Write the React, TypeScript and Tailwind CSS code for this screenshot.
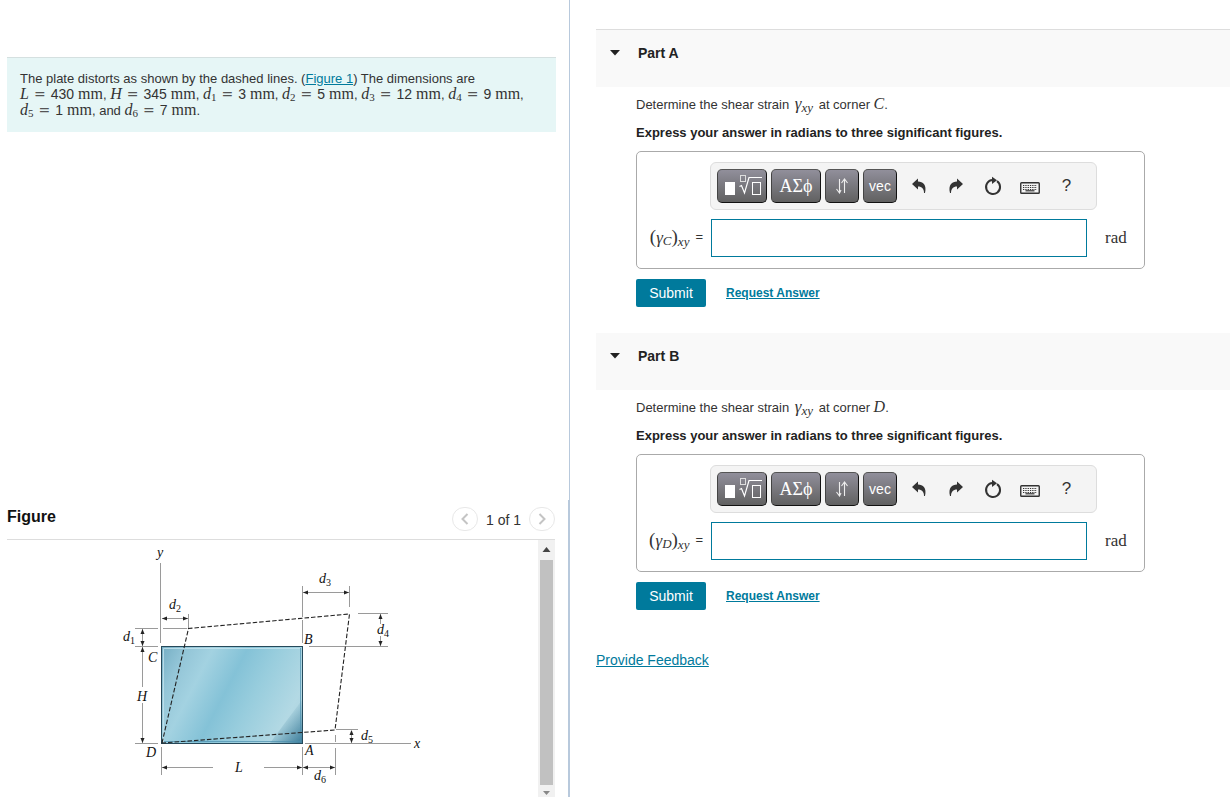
import React from "react";

const serif = "font-['Liberation_Serif',serif]";

function Var({ children, sub }: { children: string; sub?: string }) {
  return (
    <span className="font-['Liberation_Serif',serif] text-[16px] leading-[0] italic">
      {children}
      {sub && <span className="relative top-[2px] text-[11px] leading-[0] not-italic">{sub}</span>}
    </span>
  );
}

function Quantity({ name, sub, value }: { name: string; sub?: string; value: string }) {
  return (
    <span className="whitespace-nowrap">
      <Var sub={sub}>{name}</Var>
      <span className="mx-[5px] font-['DejaVu_Sans',sans-serif] text-[14px] leading-[0] text-[#555]">=</span>
      <span className="mr-1 text-[14px] leading-[0]">{value}</span>
      <span className="font-['Liberation_Serif',serif] text-[16px] leading-[0]">mm</span>
    </span>
  );
}

function Gamma() {
  return (
    <span className="mx-0.5 font-['Liberation_Serif',serif] text-[17px] leading-[0] italic">
      γ<span className="relative top-[3px] text-[13px] leading-[0]">xy</span>
    </span>
  );
}

const gray = "#9a9a9a";

function Arrow({ x, y, dir }: { x: number; y: number; dir: number }) {
  return <path d="M0 0 L-5 -2 L-5 2 Z" fill="#222" transform={`translate(${x} ${y}) rotate(${dir})`} />;
}

function Label({ x, y, children, sub }: { x: number; y: number; children: string; sub?: string }) {
  return (
    <text x={x} y={y} fontSize="14" fontStyle="italic" fill="#111" className={serif}>
      {children}
      {sub && (
        <tspan dy="3" fontSize="10" fontStyle="normal">
          {sub}
        </tspan>
      )}
    </text>
  );
}

function PlateDrawing() {
  return (
    <svg viewBox="100 540 345 250" width="345" height="250" role="img" aria-label="Distorted plate">
      <defs>
        <linearGradient id="plate" gradientUnits="userSpaceOnUse" x1="161" y1="646" x2="312" y2="724">
          <stop offset="0" stopColor="#74adc3" />
          <stop offset="0.14" stopColor="#93c5d7" />
          <stop offset="0.28" stopColor="#a3d2e1" />
          <stop offset="0.46" stopColor="#84c2d7" />
          <stop offset="0.62" stopColor="#98cddd" />
          <stop offset="0.85" stopColor="#b3d9e4" />
          <stop offset="1" stopColor="#a9d0dc" />
        </linearGradient>
        <linearGradient id="corner" gradientUnits="userSpaceOnUse" x1="284" y1="721" x2="303" y2="738">
          <stop offset="0" stopColor="#4586a2" stopOpacity="0.1" />
          <stop offset="1" stopColor="#3a7b99" stopOpacity="0.9" />
        </linearGradient>
      </defs>
      <g stroke={gray} strokeWidth="1" fill="none">
        <path d="M160.5 563V643M188.5 614V628M162 618.5H188M135 628.5H158M163 628.5H187M135 646.5H158M135 743.5H158" />
        <path d="M142.5 629V687M142.5 703V743M161.5 747V775M162 767.5H213M264 767.5H335" />
        <path d="M302.5 586V617M302.5 620V643M349.5 586V607M303 592.5H349M358 613.5H388M309 646.5H388" />
        <path d="M380.5 614V624M380.5 636V646M336 729.5H358M351.5 731V743M305 743.5H411M302.5 747V775M335.5 735V742M335.5 748V775" />
      </g>
      <rect x="161.5" y="646.5" width="141" height="97" fill="url(#plate)" />
      <path d="M302 700L270 743H302Z" fill="url(#corner)" />
      <rect x="161.5" y="646.5" width="141" height="97" fill="none" stroke="#26495a" />
      <path d="M163.5 742V648.5H300" fill="none" stroke="#c5e4ee" strokeOpacity=".8" />
      <path d="M300.5 648V741.5H164" fill="none" stroke="#4b8eae" strokeOpacity=".7" />
      <path
        d="M162 743L188.500 628.500L349.500 614L335 730Z"
        fill="none"
        stroke="#222"
        strokeWidth="1.1"
        strokeDasharray="4.500 2"
      />
      <Arrow x={162} y={618.5} dir={180} />
      <Arrow x={188} y={618.5} dir={0} />
      <Arrow x={142.5} y={629} dir={-90} />
      <Arrow x={142.5} y={646} dir={90} />
      <Arrow x={142.5} y={647} dir={-90} />
      <Arrow x={142.5} y={743} dir={90} />
      <Arrow x={162} y={767.5} dir={180} />
      <Arrow x={302} y={767.5} dir={0} />
      <Arrow x={303} y={767.5} dir={180} />
      <Arrow x={335} y={767.5} dir={0} />
      <Arrow x={303} y={592.5} dir={180} />
      <Arrow x={349} y={592.5} dir={0} />
      <Arrow x={380.5} y={614} dir={-90} />
      <Arrow x={380.5} y={646} dir={90} />
      <Arrow x={351.5} y={730} dir={-90} />
      <Arrow x={351.5} y={743} dir={90} />
      <Label x={157} y={557}>y</Label>
      <Label x={414} y={748}>x</Label>
      <Label x={169} y={609} sub="2">d</Label>
      <Label x={123} y={641} sub="1">d</Label>
      <Label x={319} y={583} sub="3">d</Label>
      <Label x={377} y={634} sub="4">d</Label>
      <Label x={361} y={740} sub="5">d</Label>
      <Label x={314} y={780} sub="6">d</Label>
      <Label x={148} y={662}>C</Label>
      <Label x={146} y={757}>D</Label>
      <Label x={304} y={644}>B</Label>
      <Label x={305} y={755}>A</Label>
      <Label x={137} y={701}>H</Label>
      <Label x={235} y={772}>L</Label>
    </svg>
  );
}

const dark =
  "flex h-[34px] items-center justify-center rounded-[5px] border border-[#111] border-t-[#555] border-l-[#444] bg-linear-to-b from-[#918f9b] to-[#616161] text-white";
const plain = "flex h-[34px] w-[33px] items-center justify-center pl-0.5 text-[#333]";

function Toolbar() {
  return (
    <div className="flex h-12 items-center gap-1 rounded-md border border-[#ddd] bg-[#f4f4f4] pl-1.5">
      <button type="button" aria-label="Templates" className={`${dark} w-[50px]`}>
        <svg width="40" height="24" viewBox="0 0 40 24" fill="none" stroke="#fff">
          <rect x="3" y="8" width="10" height="13" fill="#fff" stroke="none" />
          <rect x="18.500" y="1.500" width="5" height="6" stroke="#ddd" />
          <path d="M17.500 12.500L19.500 11.500L22.500 19L27 3.500H40" strokeWidth="1.200" />
          <rect x="30.500" y="8.500" width="8" height="12" />
        </svg>
      </button>
      <button
        type="button"
        aria-label="Greek symbols"
        className={`${dark} w-[50px] font-['Liberation_Serif',serif] text-[18px]`}
      >
        ΑΣϕ
      </button>
      <button type="button" aria-label="Arrows" className={`${dark} w-[34px]`}>
        <svg width="14" height="16" viewBox="0 0 14 16" fill="none" stroke="#eee" strokeWidth="1.100">
          <path d="M4.500 1V15M1.500 11L4.500 15L6 12M9.500 15V1M6.500 5L9.500 1L12.500 5" />
        </svg>
      </button>
      <button type="button" className={`${dark} w-[34px] text-[14px]`}>
        vec
      </button>
      <button type="button" aria-label="Undo" className={plain}>
        <svg width="16" height="18" viewBox="0 0 16 18" fill="currentColor">
          <path d="M1 7L7 1.500V4.500C12 4.500 16 8 14 16L13 16C13 12 11 9.500 7 9.500V12.500Z" />
        </svg>
      </button>
      <button type="button" aria-label="Redo" className={plain}>
        <svg width="16" height="18" viewBox="0 0 16 18" fill="currentColor">
          <path d="M15 7L9 1.500V4.500C4 4.500 0 8 2 16L3 16C3 12 5 9.500 9 9.500V12.500Z" />
        </svg>
      </button>
      <button type="button" aria-label="Reset" className={plain}>
        <svg width="18" height="20" viewBox="0 0 18 20">
          <path d="M13 5.200A7 7 0 1 1 8.500 4" fill="none" stroke="currentColor" strokeWidth="2" />
          <path d="M8 .8L13 4.300L8 8Z" fill="currentColor" />
        </svg>
      </button>
      <button type="button" aria-label="Keyboard shortcuts" className={`${plain} pt-1`}>
        <svg width="20" height="12" viewBox="0 0 20 12" fill="none" stroke="currentColor">
          <rect x=".750" y=".750" width="18.500" height="10.500" rx=".8" strokeWidth="1.400" />
          <path
            d="M3 3.500H17M3 5.500H17M3 7.500H17"
            strokeWidth="1.200"
            strokeDasharray="1.300 1"
          />
          <path d="M5.500 8.800H14.500" strokeWidth="1.200" />
        </svg>
      </button>
      <button type="button" aria-label="Help" className={`${plain} text-[17px]`}>
        ?
      </button>
    </div>
  );
}

function Part({ letter, corner, first }: { letter: string; corner: string; first?: boolean }) {
  const id = `answer-${letter}`;
  return (
    <section>
      <header
        className={`flex h-[58px] items-start gap-[18px] border-t bg-[#f9f9f9] bg-clip-padding pt-[15px] pl-3.5 ${
          first ? "border-[#ddd]" : "border-transparent"
        }`}
      >
        <svg width="10" height="6" viewBox="0 0 10 6" className="mt-[5px]">
          <path d="M0 0H10L5 5.500Z" fill="#222" />
        </svg>
        <h2 className="text-[14px] leading-4 font-bold text-[#222]">Part {letter}</h2>
      </header>
      <div className="pt-2.5 pb-[25px] pl-10">
        <p className="h-4 text-[13px] leading-4 whitespace-nowrap">
          Determine the shear strain <Gamma /> at corner <Var>{corner}</Var>.
        </p>
        <p className="mt-3 text-[13px] leading-4 font-bold text-[#222]">
          Express your answer in radians to three significant figures.
        </p>
        <div className="mt-2.5 mr-4 grid h-[118px] max-w-[509px] grid-cols-[74px_minmax(0,376px)_1fr] grid-rows-[48px_38px] gap-y-[9px] rounded-[5px] border border-[#aaa] pt-2.5">
          <div className="col-start-2 -ml-px w-[387px]">
            <Toolbar />
          </div>
          <label
            htmlFor={id}
            className="col-start-1 row-start-2 flex items-center justify-end gap-1.5 pr-2 pb-1 whitespace-nowrap"
          >
            <span className="font-['Liberation_Serif',serif] text-[19px] leading-none">
              (
              <span className="text-[17px] italic">
                γ<span className="relative top-[2px] text-[13px]">{corner}</span>
              </span>
              )<span className="relative top-[3px] text-[13px] italic">xy</span>
            </span>
            <span className="text-[13px] leading-none">=</span>
          </label>
          <input
            id={id}
            type="text"
            className="col-start-2 row-start-2 h-[38px] w-full border border-[#007a9c] bg-white px-2 text-[14px] outline-none"
          />
          <span className="col-start-3 row-start-2 self-center pb-0.5 pl-[18px] font-['Liberation_Serif',serif] text-[17px] leading-none">
            rad
          </span>
        </div>
        <div className="mt-2.5 flex items-center gap-5">
          <button type="button" className="h-7 w-[70px] rounded-[2px] bg-[#007a9c] text-[14px] font-medium text-white">
            Submit
          </button>
          <a href="#request" className="text-[12px] leading-4 font-bold text-[#007a9c] underline">
            Request Answer
          </a>
        </div>
      </div>
    </section>
  );
}

function Pager() {
  const ring = "flex h-6 w-[26px] items-center justify-center rounded-full border border-[#e8e8e8]";
  return (
    <nav aria-label="Figure pages" className="flex items-center gap-2 pb-0.5">
      <button type="button" aria-label="Previous figure" className={ring}>
        <svg width="8" height="12" viewBox="0 0 8 12" fill="none" stroke="#c4c4c4" strokeWidth="2">
          <path d="M6.500 1L1.500 6L6.500 11" />
        </svg>
      </button>
      <span className="pt-0.5 text-[14px] leading-4">1 of 1</span>
      <button type="button" aria-label="Next figure" className={ring}>
        <svg width="8" height="12" viewBox="0 0 8 12" fill="none" stroke="#c4c4c4" strokeWidth="2">
          <path d="M1.500 1L6.500 6L1.500 11" />
        </svg>
      </button>
    </nav>
  );
}

export default function App() {
  return (
    <div className="grid min-h-screen grid-cols-[minmax(0,57fr)_minmax(0,66fr)] bg-white font-['Liberation_Sans',Arial,sans-serif] text-[#333]">
      <div className="grid h-screen grid-rows-[500fr_297fr]">
        <section className="border-r border-[#b8c9dc] pt-[57px] pr-[13px] pl-[7px]">
          <p className="border-t border-[#d5e0e0] bg-[#e6f6f6] px-[13px] py-[13px] text-[13px] leading-4">
            The plate distorts as shown by the dashed lines. (
            <a href="#figure" className="text-[#007a9c] underline">
              Figure 1
            </a>
            ) The dimensions are
            <span className="block h-4">
              <Quantity name="L" value="430" />, <Quantity name="H" value="345" />,{" "}
              <Quantity name="d" sub="1" value="3" />, <Quantity name="d" sub="2" value="5" />,{" "}
              <Quantity name="d" sub="3" value="12" />, <Quantity name="d" sub="4" value="9" />,
            </span>
            <span className="block h-4">
              <Quantity name="d" sub="5" value="1" />, and <Quantity name="d" sub="6" value="7" />.
            </span>
          </p>
        </section>
        <section id="figure" className="flex min-h-0 flex-col border-r-2 border-[#b8c9dc] pr-[13px] pl-[7px]">
          <div className="flex h-10 shrink-0 items-center justify-between border-b border-[#ddd]">
            <h2 className="pb-1.5 text-[16px] leading-5 font-bold text-[#111]">Figure</h2>
            <Pager />
          </div>
          <div className="flex min-h-0 flex-1">
            <div className="flex min-w-0 flex-1 items-start justify-center overflow-hidden">
              <PlateDrawing />
            </div>
            <div className="flex w-[17px] flex-col items-center bg-[#f1f1f1]" aria-hidden="true">
              <svg width="17" height="20" viewBox="0 0 17 20">
                <path d="M4.500 12L8.500 7L12.500 12Z" fill="#444" />
              </svg>
              <div className="w-[13px] flex-1 bg-[#c1c1c1]" />
              <svg width="17" height="12" viewBox="0 0 17 12">
                <path d="M5 6H12L8.500 10Z" fill="#888" />
              </svg>
            </div>
          </div>
        </section>
      </div>
      <main className="pt-[29px] pl-[26px]">
        <Part letter="A" corner="C" first />
        <Part letter="B" corner="D" />
        <div className="pt-[13px]">
          <a href="#feedback" className="text-[14px] leading-4 text-[#007a9c] underline">
            Provide Feedback
          </a>
        </div>
      </main>
    </div>
  );
}
